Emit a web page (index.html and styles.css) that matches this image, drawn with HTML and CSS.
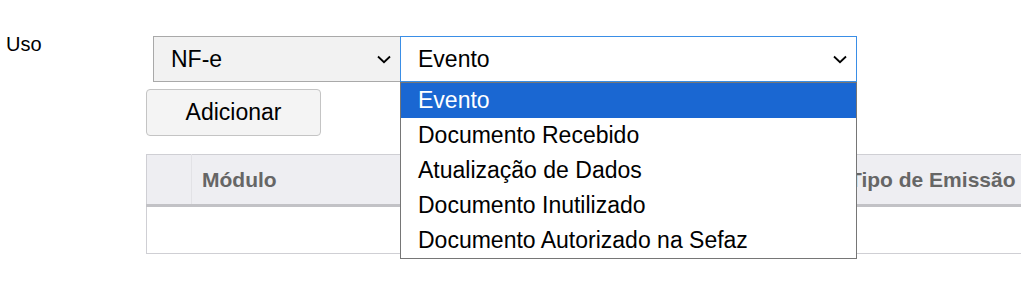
FILE: index.html
```html
<!DOCTYPE html>
<html>
<head>
	<meta charset="utf-8" />
	<title>Uso</title>
	<link rel="stylesheet" href="styles.css">
</head>
<body>
<div class="form-row">
	<label class="form-label">Uso</label>
	<div class="form-field">
		<div class="selects">
			<div class="select select-modulo">
				<span>NF-e</span>
				<svg class="chevron" width="14" height="9" viewBox="0 0 14 9"><path d="M1 1.5 L7 7.2 L13 1.5" fill="none" stroke="#000" stroke-width="1.8"/></svg>
			</div>
			<div class="select select-tipo open">
				<span>Evento</span>
				<svg class="chevron" width="14" height="9" viewBox="0 0 14 9"><path d="M1 1.5 L7 7.2 L13 1.5" fill="none" stroke="#000" stroke-width="1.8"/></svg>
				<ul class="options">
					<li class="option-selected">Evento</li>
					<li>Documento Recebido</li>
					<li>Atualização de Dados</li>
					<li>Documento Inutilizado</li>
					<li>Documento Autorizado na Sefaz</li>
				</ul>
			</div>
		</div>
		<button class="btn">Adicionar</button>
		<table class="grid">
			<thead>
				<tr>
					<th class="col-check"></th>
					<th class="col-modulo">Módulo</th>
					<th class="col-tipo">Tipo de Emissão</th>
				</tr>
			</thead>
			<tbody>
				<tr>
					<td></td>
					<td></td>
					<td></td>
				</tr>
			</tbody>
		</table>
	</div>
</div>
</body>
</html>
```

FILE: styles.css
```css
* {
	margin: 0;
	padding: 0;
	box-sizing: border-box;
}
body {
	font-family: "Liberation Sans", Arial, sans-serif;
	color: #000;
	background: #fff;
	padding-bottom: 30px;
}
ul {
	list-style: none;
}
.form-row {
	display: flex;
	padding-top: 33px;
}
.form-label {
	flex: none;
	width: 146px;
	padding-left: 6px;
	font-size: 20px;
	line-height: 23px;
}
.form-field {
	flex: 1;
	min-width: 0;
	padding-top: 3px;
}
.selects {
	display: flex;
	margin-left: 7px;
}
.select {
	position: relative;
	display: flex;
	align-items: center;
	justify-content: space-between;
	height: 46px;
	font-size: 23px;
	border: 1px solid #a9a9a9;
	padding: 0 9px 0 17px;
}
.select-modulo {
	width: 247px;
	background: #f2f2f2;
	border-right: none;
}
.select-tipo {
	width: 457px;
	background: #fff;
	border-color: #3a8ee6;
}
.chevron {
	display: block;
	margin-top: 1px;
}
.options {
	position: absolute;
	left: -1px;
	top: 45px;
	width: 457px;
	background: #fff;
	border: 1px solid #767676;
	z-index: 2;
}
.options li {
	height: 35px;
	line-height: 35px;
	padding-left: 17px;
	font-size: 23px;
}
.options .option-selected {
	background: #1a67d2;
	color: #fff;
}
.btn {
	display: block;
	margin-top: 7px;
	width: 175px;
	height: 47px;
	font-family: inherit;
	font-size: 23px;
	color: #000;
	background: #f4f4f4;
	border: 1px solid #c4c4c4;
	border-radius: 4px;
}
.grid {
	margin-top: 18px;
	width: 100%;
	table-layout: fixed;
	border-collapse: collapse;
	border-top: 1px solid #cfcfd4;
	border-left: 1px solid #cfcfd4;
}
.grid th {
	height: 51px;
	background: #eeeef2;
	border-bottom: 3px solid #c2c2c6;
	text-align: left;
	font-size: 21px;
	font-weight: bold;
	color: #666;
	padding-left: 10px;
	white-space: nowrap;
}
.grid th + th {
	border-left: 1px solid #e2e2e6;
}
.col-check {
	width: 45px;
}
.col-modulo {
	width: 647px;
}
.grid td {
	height: 48px;
	border-bottom: 1px solid #cfcfd4;
}
```
